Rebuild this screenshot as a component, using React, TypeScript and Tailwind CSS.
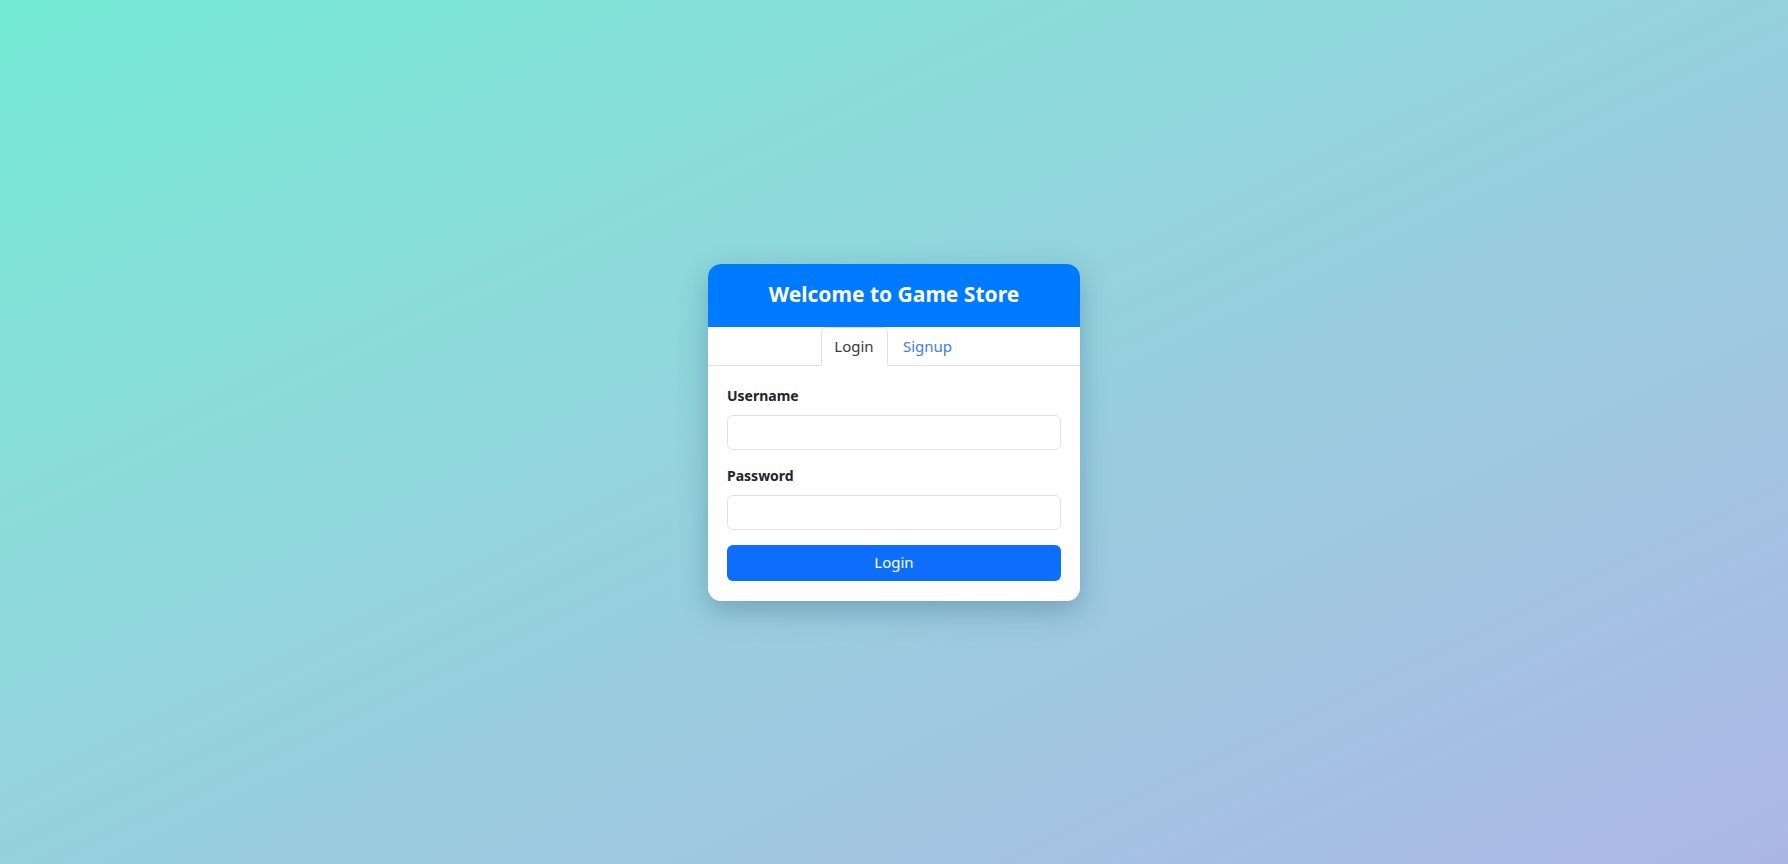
import { useState } from "react";

export default function App() {
  const [tab, setTab] = useState<"login" | "signup">("login");

  return (
    <div className="flex h-[864px] w-full items-center justify-center bg-gradient-to-br from-[#74ebd5] to-[#acb6e5] font-['Noto_Sans',sans-serif]">
      {/* Card */}
      <div className="w-[372px] overflow-hidden rounded-[13px] bg-white shadow-[0_10px_28px_rgba(40,90,120,0.35)]">
        {/* Header */}
        <div className="flex h-[63px] items-center justify-center bg-[#007bff]">
          <h1 className="text-[21px] font-bold text-white">Welcome to Game Store</h1>
        </div>

        {/* Tabs */}
        <div className="flex h-[39px] justify-center border-b border-[#dee2e6]">
          <button
            onClick={() => setTab("login")}
            className={`-mb-px w-[67px] rounded-t-[5px] border text-[15px] ${
              tab === "login"
                ? "border-[#dee2e6] border-b-white bg-white text-[#343a40]"
                : "border-transparent text-[#3d7ee0]"
            }`}
          >
            Login
          </button>
          <button
            onClick={() => setTab("signup")}
            className={`-mb-px w-[80px] rounded-t-[5px] border text-[15px] ${
              tab === "signup"
                ? "border-[#dee2e6] border-b-white bg-white text-[#343a40]"
                : "border-transparent text-[#3d7ee0]"
            }`}
          >
            Signup
          </button>
        </div>

        {/* Form */}
        <div className="px-[19px] pb-[20px] pt-[19px]">
          <label className="mb-[8px] block text-[14px] font-bold leading-[22px] text-[#212529]">Username</label>
          <input className="block h-[35px] w-full rounded-[6px] border border-[#dee2e6] px-3 outline-none" />

          <label className="mb-[8px] mt-[15px] block text-[14px] font-bold leading-[22px] text-[#212529]">Password</label>
          <input type="password" className="block h-[35px] w-full rounded-[6px] border border-[#dee2e6] px-3 outline-none" />

          <button className="mt-[15px] h-[36px] w-full rounded-[6px] bg-[#0d6efd] text-[15px] text-white">
            {tab === "login" ? "Login" : "Signup"}
          </button>
        </div>
      </div>
    </div>
  );
}
